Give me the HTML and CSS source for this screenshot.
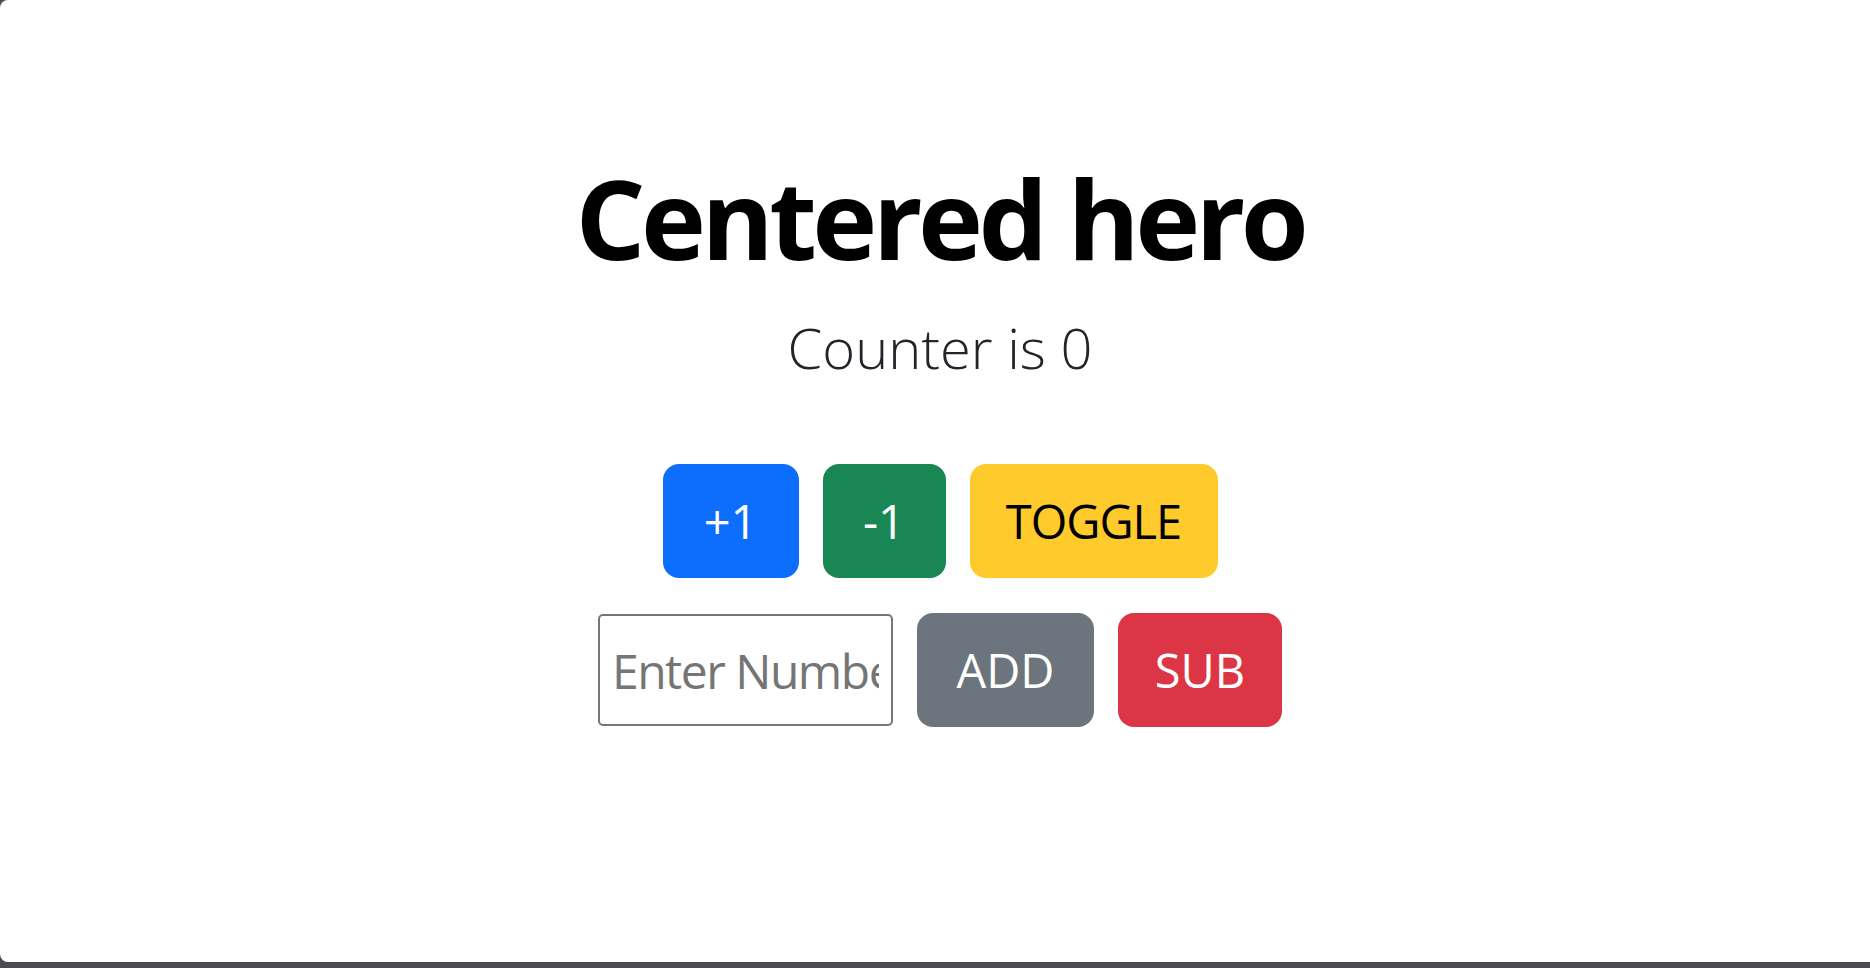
FILE: index.html
```html
<!DOCTYPE html>
<html lang="en">
<head>
<meta charset="utf-8">
<title>Centered hero</title>
<link rel="stylesheet" href="styles.css">
</head>
<body>
<div class="window">
  <main class="hero">
    <h1 class="hero-title">Centered hero</h1>
    <p class="lead">Counter is 0</p>
    <div class="btn-row btn-row-top">
      <button class="btn btn-primary btn-inc">+1</button>
      <button class="btn btn-success btn-dec">-1</button>
      <button class="btn btn-warning btn-toggle">TOGGLE</button>
    </div>
    <div class="btn-row">
      <input class="num-input" type="text" placeholder="Enter Number">
      <button class="btn btn-secondary btn-add">ADD</button>
      <button class="btn btn-danger btn-sub">SUB</button>
    </div>
  </main>
</div>
</body>
</html>
```

FILE: styles.css
```css
html, body {
  margin: 0;
  padding: 0;
  height: 100%;
}
body {
  background: #4a4a50;
  font-family: "Open Sans", "Noto Sans", sans-serif;
  color: #212529;
}
.window {
  background: #ffffff;
  height: 962px;
  border-top-left-radius: 8px;
  border-bottom-left-radius: 8px;
  overflow: hidden;
}
.hero {
  padding-top: 151px;
  padding-left: 10px;
  text-align: center;
}
.hero-title {
  margin: 0;
  font-size: 110px;
  font-weight: 700;
  letter-spacing: -4.6px;
  line-height: 1.2;
  color: #000;
}
.lead {
  margin: 22px 0 0;
  font-size: 56px;
  font-weight: 300;
  line-height: 1.5;
}
.btn-row {
  display: flex;
  justify-content: center;
  align-items: center;
  gap: 24px;
}
.btn-row-top {
  margin-top: 75px;
}
.btn-row + .btn-row {
  margin-top: 35px;
}
.btn {
  box-sizing: border-box;
  height: 114px;
  padding: 0;
  border: 2px solid transparent;
  border-radius: 16px;
  font-family: inherit;
  font-size: 47px;
  font-weight: 400;
  line-height: 1.5;
  cursor: pointer;
}
.btn-inc { width: 136px; }
.btn-dec { width: 123px; }
.btn-toggle { width: 248px; letter-spacing: -1px; }
.btn-add { width: 177px; }
.btn-sub { width: 164px; }
.btn-primary { background: #0d6efd; color: #fff; }
.btn-success { background: #198754; color: #fff; }
.btn-warning { background: #ffca2c; color: #000; }
.btn-secondary { background: #6c757d; color: #fff; }
.btn-danger { background: #dc3545; color: #fff; }
.num-input {
  box-sizing: border-box;
  width: 295px;
  height: 112px;
  border: 2.4px solid #767676;
  border-radius: 5px;
  padding: 2px 12px;
  font-family: inherit;
  font-size: 48px;
  letter-spacing: -1.5px;
  color: #212529;
  background: #fff;
}
.num-input::placeholder {
  color: #757575;
}
```
